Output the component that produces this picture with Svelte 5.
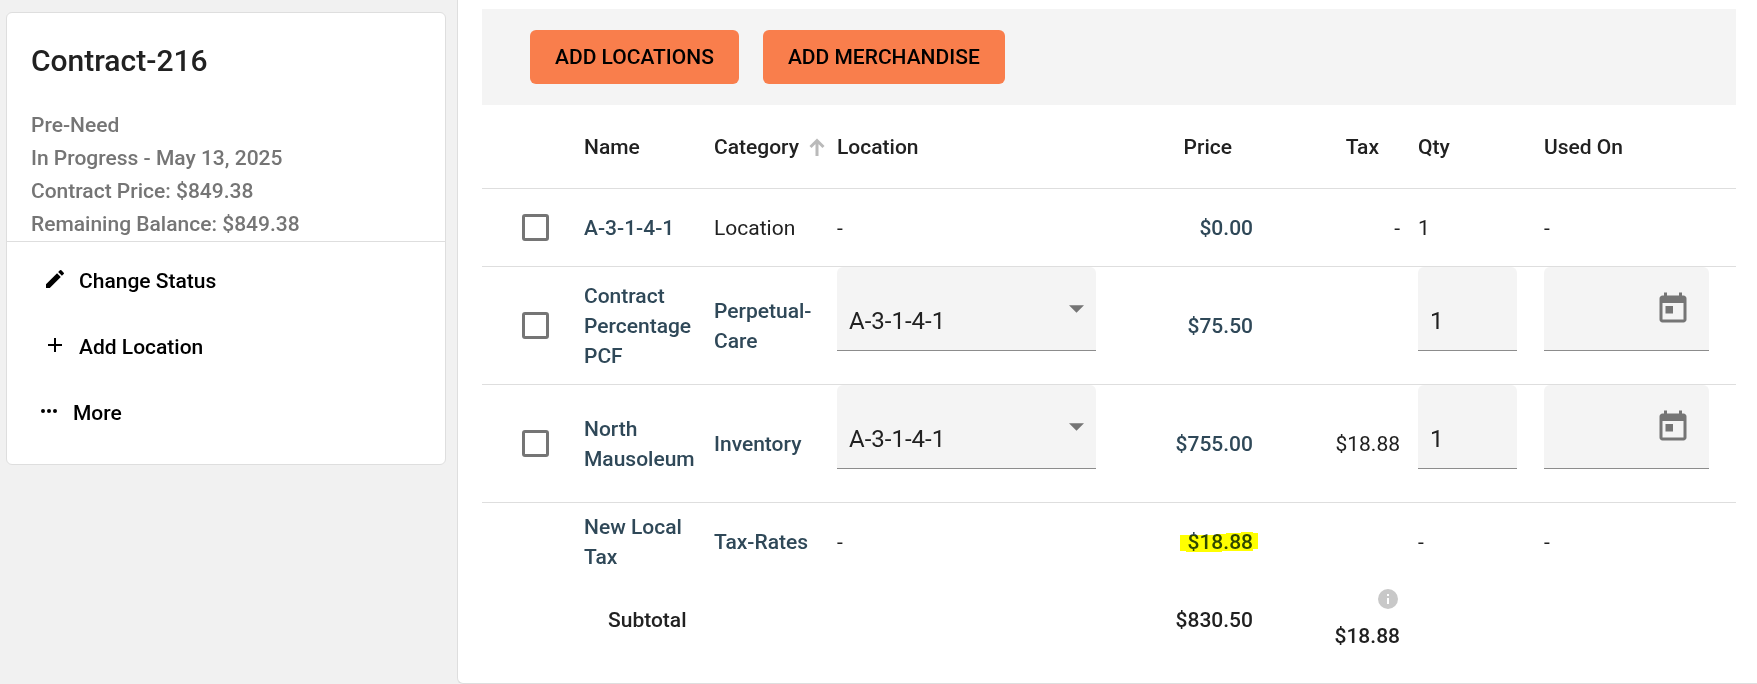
<script>
  const contract = {
    title: 'Contract-216',
    details: [
      'Pre-Need',
      'In Progress - May 13, 2025',
      'Contract Price: $849.38',
      'Remaining Balance: $849.38'
    ]
  };

  let items = $state([
    { id: 'plot', name: 'A-3-1-4-1', category: 'Location', plain: true, price: '$0.00', tax: '-', qty: '1' },
    { id: 'pcf', name: 'Contract Percentage PCF', category: 'Perpetual-Care', editable: true, price: '$75.50', tax: '', qty: '1', location: 'A-3-1-4-1', usedOn: '' },
    { id: 'north', name: 'North Mausoleum', category: 'Inventory', editable: true, price: '$755.00', tax: '$18.88', qty: '1', location: 'A-3-1-4-1', usedOn: '' },
    { id: 'local', name: 'New Local Tax', category: 'Tax-Rates', summary: true, marked: true, price: '$18.88', tax: '', qty: '-' }
  ]);
</script>

<div class="page">
  <aside>
    <section class="card">
      <header>
        <h1>{contract.title}</h1>
        {#each contract.details as line}
          <p>{line}</p>
        {/each}
      </header>
      <nav>
        <button type="button">
          <svg viewBox="0 0 24 24" aria-hidden="true"><path d="M3 17.25V21h3.75L17.81 9.94l-3.75-3.75L3 17.25zM20.71 7.04a1 1 0 0 0 0-1.41l-2.34-2.34a1 1 0 0 0-1.41 0l-1.83 1.83 3.75 3.75 1.83-1.83z" /></svg>
          <span>Change Status</span>
        </button>
        <button type="button">
          <svg viewBox="0 0 24 24" aria-hidden="true"><path d="M19 13h-6v6h-2v-6H5v-2h6V5h2v6h6v2z" /></svg>
          <span>Add Location</span>
        </button>
        <button type="button" class="more">
          <svg viewBox="0 0 24 24" aria-hidden="true"><path d="M6 10a2 2 0 1 0 0 4 2 2 0 0 0 0-4zm12 0a2 2 0 1 0 0 4 2 2 0 0 0 0-4zm-6 0a2 2 0 1 0 0 4 2 2 0 0 0 0-4z" /></svg>
          <span>More</span>
        </button>
      </nav>
    </section>
  </aside>

  <main>
    <div class="toolbar">
      <button type="button">ADD LOCATIONS</button>
      <button type="button">ADD MERCHANDISE</button>
    </div>

    <table>
      <colgroup>
        <col class="c-check" /><col class="c-name" /><col class="c-category" /><col />
        <col class="c-price" /><col class="c-tax" /><col class="c-qty" /><col class="c-used" />
      </colgroup>
      <thead>
        <tr>
          <td></td>
          <th scope="col">Name</th>
          <th scope="col" aria-sort="ascending">
            <span class="sorted">
              Category
              <svg viewBox="0 0 16 18" aria-hidden="true"><path d="M8 18V2M1.500 9 8 2.500 14.500 9" /></svg>
            </span>
          </th>
          <th scope="col">Location</th>
          <th scope="col" class="num">Price</th>
          <th scope="col" class="num tax">Tax</th>
          <th scope="col">Qty</th>
          <th scope="col">Used On</th>
        </tr>
      </thead>
      <tbody>
        {#each items as item (item.id)}
          <tr class:editable={item.editable} class:summary={item.summary}>
            <td class="check">
              {#if !item.summary}
                <input type="checkbox" aria-label={`Select ${item.name}`} />
              {/if}
            </td>
            <td><a href="#{item.id}">{item.name}</a></td>
            <td>
              {#if item.plain}{item.category}{:else}<a href="#{item.id}">{item.category}</a>{/if}
            </td>
            {#if item.editable}
              <td class="top">
                <div class="field select">
                  <select aria-label={`Location of ${item.name}`} bind:value={item.location}>
                    <option>A-3-1-4-1</option>
                  </select>
                  <svg viewBox="0 0 14 7" aria-hidden="true"><path d="M0 0h14L7 7z" /></svg>
                </div>
              </td>
            {:else}
              <td>-</td>
            {/if}
            <td class="num">
              <a href="#{item.id}" class:marked={item.marked}>
                {item.price}
                {#if item.marked}
                  <svg viewBox="0 0 78 20" aria-hidden="true"><path d="M0 3H36V2H46V1H61V0H73V1H78V17H73V19H42V20H6V19H0z" /></svg>
                {/if}
              </a>
            </td>
            <td class="num tax">{item.tax}</td>
            {#if item.editable}
              <td class="top">
                <div class="field qty">
                  <input type="text" inputmode="numeric" aria-label={`Quantity of ${item.name}`} bind:value={item.qty} />
                </div>
              </td>
              <td class="top">
                <div class="field date">
                  <input type="text" aria-label={`${item.name} used on`} bind:value={item.usedOn} />
                  <button type="button" aria-label="Open calendar">
                    <svg viewBox="0 0 24 24" aria-hidden="true"><path d="M19 3h-1V1h-2v2H8V1H6v2H5c-1.110 0-1.990.9-1.990 2L3 19c0 1.100.89 2 2 2h14c1.100 0 2-.9 2-2V5c0-1.100-.9-2-2-2zm0 16H5V8h14v11zM7 10h5v5H7z" /></svg>
                  </button>
                </div>
              </td>
            {:else}
              <td>{item.qty}</td>
              <td>-</td>
            {/if}
          </tr>
        {/each}
      </tbody>
      <tfoot>
        <tr>
          <td></td>
          <th scope="row" colspan="3">Subtotal</th>
          <td class="num">$830.50</td>
          <td class="num tax">
            <svg class="info" viewBox="0 0 20 20" aria-hidden="true"><circle cx="10" cy="10" r="10" /><path d="M9 5h2v2H9zM9 9h2v6H9z" /></svg>
            <div>$18.88</div>
          </td>
          <td></td>
          <td></td>
        </tr>
      </tfoot>
    </table>
  </main>
</div>

<style>
  :global(body) {
    margin: 0;
    background: #f1f1f1;
  }

  .page {
    display: grid;
    grid-template-columns: 457px minmax(0, 1fr);
    align-items: start;
    color: #212121;
    font: 400 21px/30px Roboto, sans-serif;
  }

  button,
  input,
  select {
    box-sizing: border-box;
    margin: 0;
    font: inherit;
    color: inherit;
  }

  button {
    border: 0;
    background: none;
    cursor: pointer;
  }

  aside {
    padding: 12px 11px 0 6px;
  }

  .card {
    border: 1px solid #dedede;
    border-radius: 6px;
    background: #fff;
  }

  .card header {
    padding: 24px 24px 0;
    border-bottom: 1px solid #dedede;
  }

  h1 {
    margin: 0 0 24px;
    font-size: 30px;
    line-height: 48px;
    font-weight: 500;
  }

  p {
    margin: 0;
    color: #757575;
    font-weight: 500;
    line-height: 33px;
  }

  .card nav {
    display: flex;
    flex-direction: column;
    align-items: flex-start;
    padding: 6px 36px 18px;
  }

  .card nav button {
    display: flex;
    align-items: center;
    gap: 12px;
    height: 66px;
    padding: 0;
    color: #000;
    font-weight: 500;
  }

  .card nav button.more {
    margin-left: -6px;
  }

  .card nav svg {
    width: 24px;
    height: 24px;
    margin-bottom: 4px;
    fill: currentColor;
  }

  main {
    padding: 9px 21px 23px 24px;
    border-left: 1px solid #dedede;
    border-bottom: 1px solid #dedede;
    border-bottom-left-radius: 6px;
    background: #fff;
  }

  .toolbar {
    display: flex;
    gap: 24px;
    padding: 21px 48px;
    background: #f4f4f4;
  }

  .toolbar button {
    height: 54px;
    padding: 0 25px;
    border-radius: 6px;
    background: #f97e4c;
    color: #000;
    font-weight: 500;
  }

  table {
    width: 100%;
    table-layout: fixed;
    border-collapse: separate;
    border-spacing: 0;
  }

  .c-check { width: 102px; }
  .c-name { width: 130px; }
  .c-category { width: 123px; }
  .c-price { width: 136px; }
  .c-tax { width: 165px; }
  .c-qty { width: 126px; }
  .c-used { width: 192px; }

  th,
  td {
    height: 77px;
    padding: 0;
    text-align: left;
    vertical-align: middle;
    border-bottom: 1px solid #dedede;
  }

  th {
    font-weight: 500;
  }

  thead th,
  thead td {
    height: 83px;
  }

  .num {
    text-align: right;
  }

  .tax {
    padding-right: 18px;
  }

  thead .num {
    padding-right: 21px;
  }

  thead .tax {
    padding-right: 39px;
  }

  .sorted {
    display: flex;
    align-items: center;
    gap: 10px;
  }

  .sorted svg {
    width: 16px;
    height: 18px;
    fill: none;
    stroke: #bababa;
    stroke-width: 3;
  }

  .editable td {
    height: 117px;
  }

  td.top {
    vertical-align: top;
  }

  .summary td,
  tfoot th,
  tfoot td {
    border-bottom: 0;
  }

  tfoot th,
  tfoot td {
    height: 80px;
    font-weight: 500;
  }

  tfoot th {
    padding-left: 24px;
  }

  a {
    color: #2f4858;
    font-weight: 500;
    text-decoration: none;
  }

  .marked {
    position: relative;
    display: inline-block;
  }

  .marked svg {
    position: absolute;
    top: 5px;
    right: -5px;
    width: 78px;
    height: 20px;
    fill: #ff0;
    mix-blend-mode: multiply;
  }

  .check input {
    display: block;
    width: 27px;
    height: 27px;
    margin-left: 40px;
    border: 3px solid #757575;
    border-radius: 3px;
    appearance: none;
  }

  .check input:checked {
    background: #757575;
  }

  .field {
    display: flex;
    align-items: center;
    box-sizing: border-box;
    height: 84px;
    border-bottom: 1px solid #8c8c8c;
    border-radius: 6px 6px 0 0;
    background: #f4f4f4;
    font-size: 24px;
  }

  .field input,
  .field select {
    flex: 1;
    min-width: 0;
    height: 100%;
    padding: 24px 12px 0;
    border: 0;
    background: none;
    appearance: none;
  }

  .field.select {
    margin-right: 21px;
  }

  .field.select svg {
    width: 15px;
    height: 8px;
    margin-right: 12px;
    fill: #757575;
  }

  .field.qty,
  .field.date {
    margin-right: 27px;
  }

  .field button {
    display: flex;
    padding: 0 18px 0 0;
  }

  .field button svg {
    width: 36px;
    height: 36px;
    fill: #757575;
  }

  .info {
    display: block;
    width: 20px;
    height: 20px;
    margin: 0 2px 12px auto;
    fill: #c8c8c8;
  }

  .info path {
    fill: #fff;
  }
</style>
